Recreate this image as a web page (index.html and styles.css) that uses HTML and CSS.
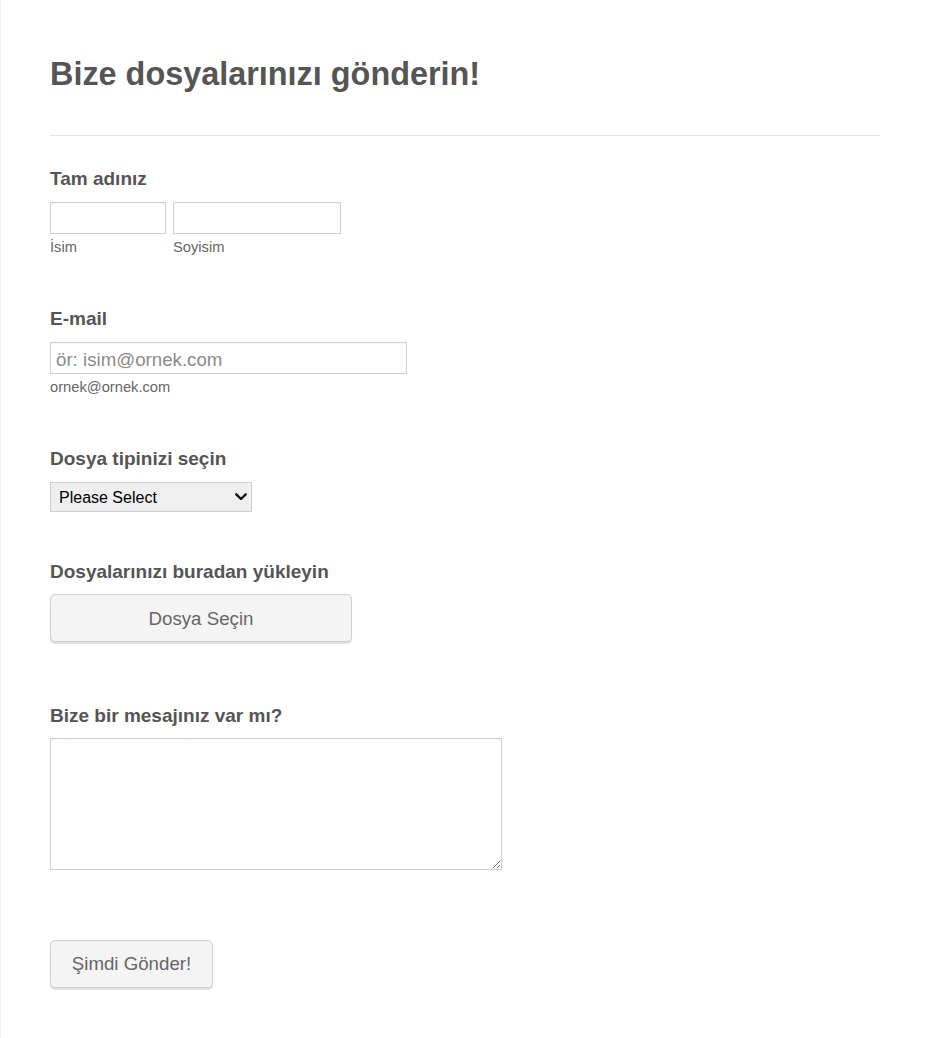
FILE: index.html
```html
<!DOCTYPE html>
<html lang="tr">
<head>
<meta charset="utf-8">
<title>Bize dosyalarınızı gönderin!</title>
<link rel="stylesheet" href="styles.css">
</head>
<body>
<div class="page">
  <header class="form-header">
    <h1 class="form-title">Bize dosyalarınızı gönderin!</h1>
  </header>
  <form class="fields">
    <div class="field field-name">
      <label class="field-label">Tam adınız</label>
      <div class="name-row">
        <div class="name-part">
          <input class="text-input input-first" type="text">
          <span class="sublabel">İsim</span>
        </div>
        <div class="name-part">
          <input class="text-input input-last" type="text">
          <span class="sublabel">Soyisim</span>
        </div>
      </div>
    </div>
    <div class="field field-email">
      <label class="field-label">E-mail</label>
      <input class="text-input input-email" type="email" placeholder="ör: isim@ornek.com">
      <span class="sublabel">ornek@ornek.com</span>
    </div>
    <div class="field field-type">
      <label class="field-label">Dosya tipinizi seçin</label>
      <div class="select-wrap">
        <select class="select-input">
          <option>Please Select</option>
        </select>
        <svg class="select-arrow" width="12" height="8" viewBox="0 0 12 8" aria-hidden="true">
          <path d="M1.3 1.3 L6 6 L10.7 1.3" fill="none" stroke="#111" stroke-width="2.4" stroke-linecap="round" stroke-linejoin="round"/>
        </svg>
      </div>
    </div>
    <div class="field field-upload">
      <label class="field-label label-tight">Dosyalarınızı buradan yükleyin</label>
      <button type="button" class="btn btn-upload">Dosya Seçin</button>
    </div>
    <div class="field field-message">
      <label class="field-label label-tight">Bize bir mesajınız var mı?</label>
      <textarea class="textarea-input"></textarea>
    </div>
    <div class="field field-submit">
      <button type="button" class="btn btn-submit">Şimdi Gönder!</button>
    </div>
  </form>
</div>
</body>
</html>
```

FILE: styles.css
```css
html, body {
  margin: 0;
  padding: 0;
  background: #fff;
}

body {
  font-family: "Liberation Sans", Arial, sans-serif;
  color: #555;
}

.page {
  border-left: 1px solid #f0f0f0;
  min-height: 1038px;
  box-sizing: border-box;
  padding: 0 50px 0 49px;
}

.form-header {
  padding-top: 56px;
  padding-bottom: 42px;
  border-bottom: 1px solid #e3e3e3;
}

.form-title {
  margin: 0;
  font-size: 32.4px;
  line-height: 37px;
  font-weight: bold;
  color: #555;
}

.fields {
  padding-top: 32px;
  display: flex;
  flex-direction: column;
}

.field {
  display: flex;
  flex-direction: column;
  align-items: flex-start;
}

.field-name { margin-bottom: 52px; }
.field-email { margin-bottom: 52px; }
.field-type { margin-bottom: 49px; }
.field-upload { margin-bottom: 63px; }
.field-message { margin-bottom: 70px; }

.field-label {
  display: block;
  font-size: 19px;
  line-height: 22px;
  font-weight: bold;
  color: #555;
  margin-bottom: 12px;
}

.label-tight {
  margin-bottom: 11px;
}

.name-row {
  display: flex;
  gap: 7px;
}

.name-part {
  display: flex;
  flex-direction: column;
}

.text-input {
  box-sizing: border-box;
  height: 32px;
  margin: 0;
  border: 1px solid #cfcfcf;
  box-shadow: inset 0 1px 1px rgba(0,0,0,0.04);
  padding: 3px 5px 0;
  font-family: "Liberation Sans", Arial, sans-serif;
  font-size: 18.7px;
  color: #555;
  background: #fff;
  outline: none;
}

.text-input::placeholder {
  color: #8a8a8a;
}

.input-first { width: 116px; }
.input-last { width: 168px; }
.input-email { width: 357px; }

.sublabel {
  display: block;
  margin-top: 4px;
  font-size: 14.7px;
  line-height: 18px;
  color: #666;
}

.select-wrap {
  position: relative;
  width: 202px;
  height: 30px;
}

.select-input {
  -webkit-appearance: none;
  appearance: none;
  box-sizing: border-box;
  width: 202px;
  height: 30px;
  margin: 0;
  padding: 0 24px 0 8px;
  border: 1px solid #cdcdcd;
  border-radius: 0;
  background-color: #efefef;
  font-family: "Liberation Sans", Arial, sans-serif;
  font-size: 16px;
  color: #000;
}

.select-arrow {
  position: absolute;
  left: 185px;
  top: 11px;
  pointer-events: none;
}

.btn {
  box-sizing: border-box;
  margin: 0;
  border: 1px solid #cfcfcf;
  border-radius: 5px;
  background: #f4f4f4;
  box-shadow: 0 2px 1px rgba(0,0,0,0.12);
  font-family: "Liberation Sans", Arial, sans-serif;
  font-size: 18.7px;
  color: #666;
  cursor: pointer;
}

.btn-upload {
  width: 302px;
  height: 48px;
  padding-top: 2px;
}

.btn-submit {
  width: 163px;
  height: 48px;
}

.textarea-input {
  box-sizing: border-box;
  width: 452px;
  height: 132px;
  margin: 0;
  border: 1px solid #cfcfcf;
  box-shadow: inset 0 1px 1px rgba(0,0,0,0.04);
  font-family: "Liberation Sans", Arial, sans-serif;
  font-size: 16px;
  background: #fff;
  outline: none;
}
```
